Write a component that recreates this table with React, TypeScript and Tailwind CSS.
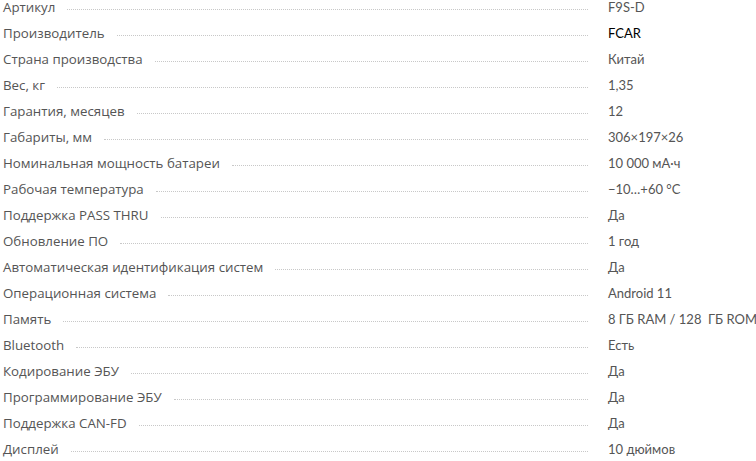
const specs: { label: string; value: string; strong?: boolean }[] = [
  { label: "Артикул", value: "F9S-D" },
  { label: "Производитель", value: "FCAR", strong: true },
  { label: "Страна производства", value: "Китай" },
  { label: "Вес, кг", value: "1,35" },
  { label: "Гарантия, месяцев", value: "12" },
  { label: "Габариты, мм", value: "306×197×26" },
  { label: "Номинальная мощность батареи", value: "10 000 мА·ч" },
  { label: "Рабочая температура", value: "−10…+60 °C" },
  { label: "Поддержка PASS THRU", value: "Да" },
  { label: "Обновление ПО", value: "1 год" },
  { label: "Автоматическая идентификация систем", value: "Да" },
  { label: "Операционная система", value: "Android 11" },
  { label: "Память", value: "8 ГБ RAM / 128  ГБ ROM" },
  { label: "Bluetooth", value: "Есть" },
  { label: "Кодирование ЭБУ", value: "Да" },
  { label: "Программирование ЭБУ", value: "Да" },
  { label: "Поддержка CAN-FD", value: "Да" },
  { label: "Дисплей", value: "10 дюймов" },
];

export default function App() {
  return (
    <div className="h-[461px] w-[756px] overflow-hidden bg-white">
      {/* Characteristics list */}
      <dl className="-mt-px flex flex-col gap-[10px] pl-[3px]">
        {specs.map((row) => (
          <div key={row.label} className="flex h-4 items-center">
            <dt className="flex w-[585px] shrink-0 items-center text-[13.3px] leading-4 text-[#555] [font-family:'Open_Sans',sans-serif]">
              <span className="whitespace-nowrap">{row.label}</span>
              <span className="ml-3 mt-[4px] h-0 flex-1 border-b border-dotted border-[#c8c8c8]" />
            </dt>
            <dd
              className={
                "ml-[20px] whitespace-pre text-[13px] leading-4 [font-family:Lato,sans-serif] " +
                (row.strong ? "text-black" : "text-[#555]")
              }
            >
              {row.value}
            </dd>
          </div>
        ))}
      </dl>
    </div>
  );
}
